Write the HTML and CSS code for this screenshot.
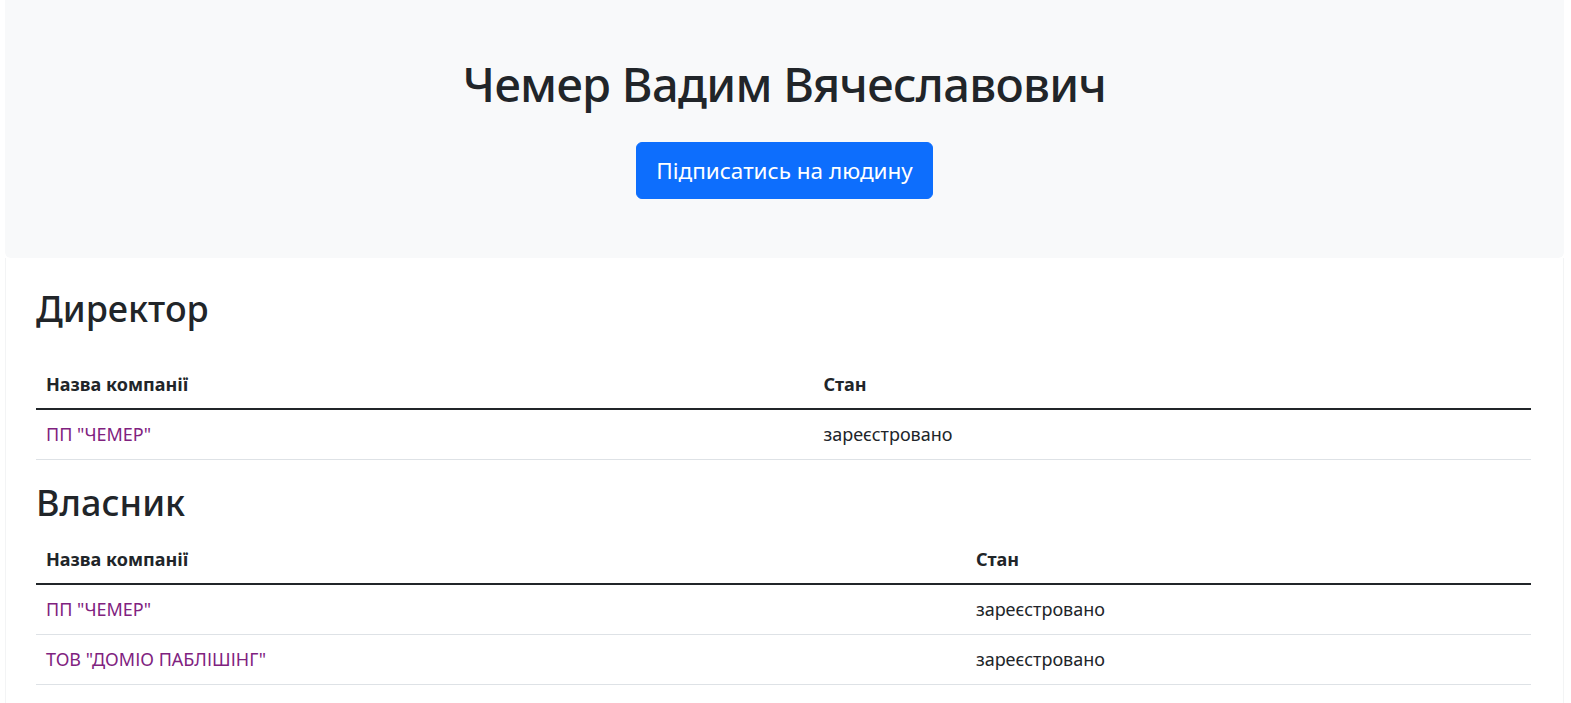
FILE: index.html
```html
<!DOCTYPE html>
<html lang="uk">
<head>
<meta charset="utf-8">
<title>Чемер Вадим Вячеславович</title>
<link rel="stylesheet" href="styles.css">
</head>
<body>
<div class="wrap">
  <header class="hero">
    <h1 class="hero-title">Чемер Вадим Вячеславович</h1>
    <button class="btn-primary" type="button">Підписатись на людину</button>
  </header>
  <main class="content">
    <section class="block block-first">
      <h2 class="section-title">Директор</h2>
      <table class="table">
        <colgroup><col class="col-name-1"><col></colgroup>
        <thead>
          <tr><th>Назва компанії</th><th>Стан</th></tr>
        </thead>
        <tbody>
          <tr><td><a class="company" href="#">ПП "ЧЕМЕР"</a></td><td>зареєстровано</td></tr>
        </tbody>
      </table>
    </section>
    <section class="block">
      <h2 class="section-title">Власник</h2>
      <table class="table">
        <colgroup><col class="col-name-2"><col></colgroup>
        <thead>
          <tr><th>Назва компанії</th><th>Стан</th></tr>
        </thead>
        <tbody>
          <tr><td><a class="company" href="#">ПП "ЧЕМЕР"</a></td><td>зареєстровано</td></tr>
          <tr><td><a class="company" href="#">ТОВ "ДОМІО ПАБЛІШІНГ"</a></td><td>зареєстровано</td></tr>
        </tbody>
      </table>
    </section>
  </main>
</div>
</body>
</html>
```
FILE: styles.css
```css
* { box-sizing: border-box; }

body {
  margin: 0;
  background: #fff;
  color: #212529;
  font-family: "Noto Sans", "Open Sans", "Liberation Sans", sans-serif;
  font-size: 18px;
  line-height: 1.5;
}

.wrap {
  margin: 0 7px 0 5px;
}

.hero {
  background: #f8f9fa;
  border-radius: 0 0 6px 6px;
  padding: 56px 16px 59px;
  display: flex;
  flex-direction: column;
  align-items: center;
}

.hero-title {
  margin: 0 0 30px;
  font-size: 47px;
  font-weight: 500;
  line-height: 1.2;
  letter-spacing: -0.7px;
}

.btn-primary {
  font-family: inherit;
  font-size: 22.5px;
  line-height: 1.5;
  color: #fff;
  background: #0d6efd;
  border: 1px solid #0d6efd;
  border-radius: 6px;
  padding: 10.5px 19.5px;
  cursor: pointer;
}

.content {
  border-left: 1px solid #f3f4f5;
  border-right: 1px solid #f3f4f5;
  padding: 29px 32px 20px 30px;
}

.section-title {
  margin: 0 0 10px;
  font-size: 36px;
  font-weight: 500;
  line-height: 1.2;
}

.block-first .section-title {
  margin-bottom: 30px;
}

.block + .block {
  margin-top: 21px;
}

.table {
  width: 100%;
  border-collapse: collapse;
}

.col-name-1 { width: 52%; }
.col-name-2 { width: 62.2%; }

.table th,
.table td {
  text-align: left;
  vertical-align: top;
}

.table th {
  padding: 11px 10px 10px;
  font-weight: 700;
  border-bottom: 2px solid #212529;
}

.table td {
  padding: 11px 10px;
  border-bottom: 1px solid #dee2e6;
}

.company {
  color: #80227f;
  text-decoration: none;
}
```
